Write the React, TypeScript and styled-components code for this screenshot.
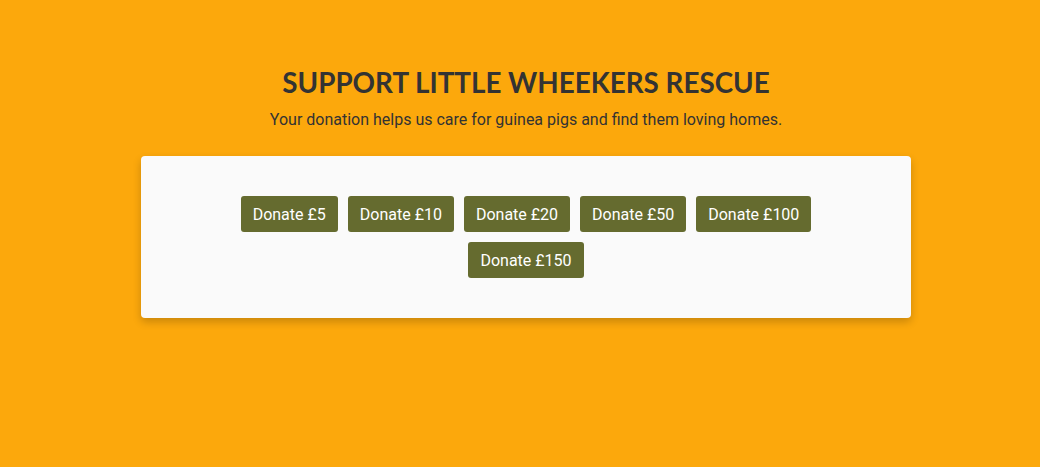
import React from "react";
import styled, { createGlobalStyle } from "styled-components";

const GlobalStyle = createGlobalStyle`
  html, body {
    margin: 0;
    padding: 0;
    background: #fca80c;
  }
  body {
    font-family: Roboto, "Noto Sans", sans-serif;
    color: #333333;
  }
`;

const Page = styled.main`
  min-height: 467px;
  box-sizing: border-box;
  padding: 66px 0 0 12px;
  display: flex;
  flex-direction: column;
  align-items: center;
`;

const Header = styled.header`
  display: flex;
  flex-direction: column;
  align-items: center;
  margin-bottom: 26px;
`;

const Title = styled.h1`
  font-family: Lato, "Noto Sans", sans-serif;
  font-weight: 700;
  font-size: 27.8px;
  line-height: 34px;
  margin: 0 0 10px;
  color: #333333;
`;

const Subtitle = styled.p`
  font-family: Roboto, sans-serif;
  font-size: 16px;
  line-height: 20px;
  margin: 0;
  color: #333333;
`;

const Card = styled.section`
  width: 770px;
  box-sizing: border-box;
  padding: 35px 40px;
  background: #fafafa;
  border-radius: 4px;
  box-shadow: 0 4px 8px rgba(0, 0, 0, 0.2);
  display: flex;
  flex-wrap: wrap;
  justify-content: center;
`;

const DonateButton = styled.button`
  margin: 5px;
  height: 36px;
  padding: 0 12px;
  border: none;
  border-radius: 3px;
  background: #656b2f;
  color: #ffffff;
  font-family: Roboto, sans-serif;
  font-size: 16px;
  cursor: pointer;
`;

const amounts = [5, 10, 20, 50, 100, 150];

export default function App() {
  return (
    <>
      <GlobalStyle />
      <Page>
        <Header>
          <Title>SUPPORT LITTLE WHEEKERS RESCUE</Title>
          <Subtitle>Your donation helps us care for guinea pigs and find them loving homes.</Subtitle>
        </Header>
        <Card>
          {amounts.map((a) => (
            <DonateButton key={a}>Donate £{a}</DonateButton>
          ))}
        </Card>
      </Page>
    </>
  );
}
